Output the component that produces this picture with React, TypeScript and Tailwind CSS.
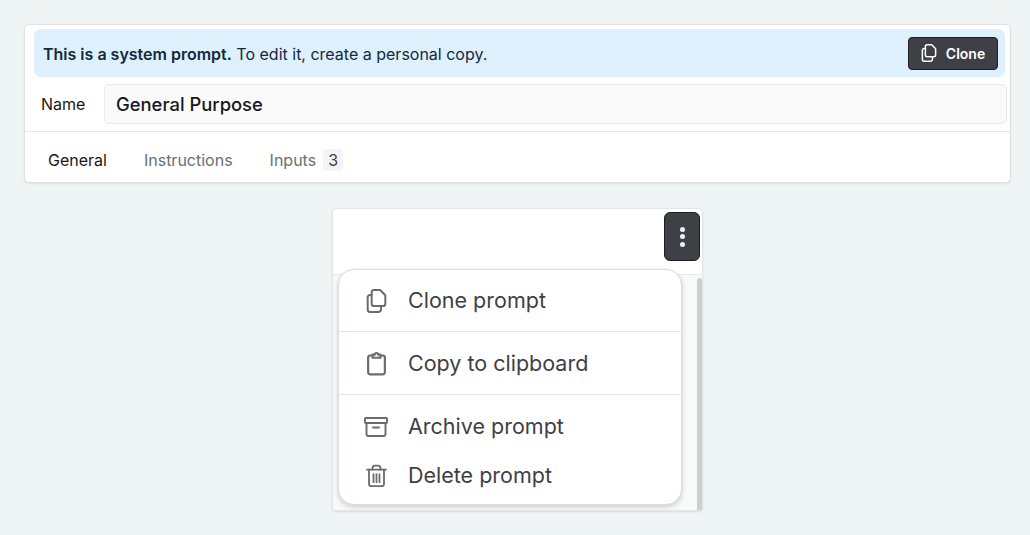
import React from "react";

function CloneIcon({ className }: { className?: string }) {
  return (
    <svg viewBox="2.7 2.3 16.8 20.4" fill="none" stroke="currentColor" strokeWidth="1.7" strokeLinejoin="round" strokeLinecap="round" className={className}>
      <path d="M9 3.200h5.200l4.400 4.400v7.200a2 2 0 0 1-2 2H9a2 2 0 0 1-2-2V5.200a2 2 0 0 1 2-2Z" />
      <path d="M7 7.400H5.600a2 2 0 0 0-2 2v10.400a2 2 0 0 0 2 2h6.800a2.600 2.600 0 0 0 2.600-2.600v-2.400" />
    </svg>
  );
}

function ClipboardIcon({ className }: { className?: string }) {
  return (
    <svg viewBox="3.7 2 16.600 21" fill="none" stroke="currentColor" strokeWidth="1.900" strokeLinejoin="round" strokeLinecap="round" className={className}>
      <path d="M8.500 5.500H6.500a1.800 1.800 0 0 0-1.800 1.800v12.900A1.800 1.800 0 0 0 6.500 22h11a1.800 1.800 0 0 0 1.800-1.800V7.300a1.800 1.800 0 0 0-1.800-1.800h-2" />
      <path d="M8.500 7.500V4.800h2a1.500 1.500 0 0 1 3 0h2v2.700Z" />
    </svg>
  );
}

function ArchiveIcon({ className }: { className?: string }) {
  return (
    <svg viewBox="0 2 24 20" fill="none" stroke="currentColor" strokeWidth="1.900" strokeLinejoin="round" strokeLinecap="round" className={className}>
      <rect x="1" y="3" width="22" height="5" rx="0.800" />
      <path d="M2.500 8v11a2 2 0 0 0 2 2h15a2 2 0 0 0 2-2V8" />
      <path d="M9 12.500h6" />
    </svg>
  );
}

function TrashIcon({ className }: { className?: string }) {
  return (
    <svg viewBox="1.500 1.200 21 22.200" fill="none" stroke="currentColor" strokeWidth="1.800" strokeLinejoin="round" strokeLinecap="round" className={className}>
      <path d="M2.500 6h19" />
      <path d="M8 6V4.500A2.500 2.500 0 0 1 10.500 2h3A2.500 2.500 0 0 1 16 4.500V6" />
      <path d="M4.500 6v14a2.500 2.500 0 0 0 2.500 2.500h10a2.500 2.500 0 0 0 2.500-2.500V6" />
      <path d="M9 10.500v8M12 10.500v8M15 10.500v8" />
    </svg>
  );
}

function MenuRow({ icon, label, className }: { icon: React.ReactNode; label: string; className: string }) {
  return (
    <div className={`flex items-center pl-[24px] text-[#3f3f46] ${className}`}>
      <span className="flex w-[45px] shrink-0 items-center text-[#6b6b72]">
        <span className="flex w-[26px] justify-center">{icon}</span>
      </span>
      <span className="text-[21.500px] leading-none">{label}</span>
    </div>
  );
}

export default function App() {
  return (
    <div className="h-[535px] w-[1030px] overflow-hidden bg-[#eff5f5] pt-[24px] font-['Inter',sans-serif]">
      <div className="ml-[24px] w-[987px] rounded-[5px] border border-[#dfe2e3] bg-white shadow-[0_1px_2px_rgba(0,0,0,0.08)]">
        <div className="pl-[9px] pr-[5px] pt-[4px]">
          <div className="flex h-[48px] items-center justify-between rounded-[7px] bg-[#dff0fd] pl-[9px] pr-[7px]">
            <p className="pt-[2px] text-[16px] text-[#13293d]">
              <span className="font-semibold">This is a system prompt.</span> To edit it, create a personal copy.
            </p>
            <button className="flex h-[33px] w-[90px] items-center justify-center gap-[9px] rounded-[4px] border border-[#1f1f23] bg-[#3f3f46] text-[14px] font-semibold text-white">
              <CloneIcon className="h-[18px] w-[16px]" />
              Clone
            </button>
          </div>
        </div>
        <div className="flex items-center pl-[16px] pr-[3px] pt-[7px]">
          <span className="w-[63px] text-[16px] text-[#18181b]">Name</span>
          <div className="flex h-[40px] flex-1 items-center rounded-[5px] border border-[#e8e9ea] bg-[#fafafa] pl-[11px] pt-[1px] text-[18.400px] font-medium text-[#18181b]">
            General Purpose
          </div>
        </div>
        <div className="mt-[7px] flex h-[51px] items-center border-t border-[#e3e5e6] pl-[23px] pt-[5px] text-[16px]">
          <span className="text-[#18181b]">General</span>
          <span className="ml-[37px] text-[#6b6f76]">Instructions</span>
          <span className="ml-[37px] text-[#6b6f76]">Inputs</span>
          <span className="ml-[7px] flex h-[22px] w-[20px] items-center justify-center rounded-[4px] bg-[#f4f4f5] text-[#3f3f46]">3</span>
        </div>
      </div>

      <div className="relative ml-[332px] mt-[25px] flex h-[303px] w-[371px] flex-col rounded-[4px] border border-[#e3e5e6] bg-white shadow-[0_1px_2px_rgba(0,0,0,0.1)]">
        <div className="flex h-[66px] items-start justify-end border-b border-[#e8e9ea] pr-[2px] pt-[3px]">
          <button className="flex h-[49px] w-[36px] flex-col items-center justify-center gap-[2.500px] rounded-[6px] border border-[#1f1f23] bg-[#3f3f46]">
            <span className="h-[5px] w-[5px] rounded-full bg-[#f0f0f2]" />
            <span className="h-[5px] w-[5px] rounded-full bg-[#f0f0f2]" />
            <span className="h-[5px] w-[5px] rounded-full bg-[#f0f0f2]" />
          </button>
        </div>
        <div className="flex flex-1 justify-end bg-[#f8f9f9]">
          <div className="mt-[3px] w-[5px] rounded-t-[3px] bg-[#cdd0d0]" />
        </div>
        <div className="absolute left-[5px] top-[60px] w-[344px] rounded-[16px] border border-[#dcdedf] bg-white shadow-[0_2px_5px_rgba(0,0,0,0.18)]">
          <MenuRow className="h-[62px] border-b border-[#e3e5e6] pt-[1px]" icon={<CloneIcon className="h-[24px] w-[21px]" />} label="Clone prompt" />
          <MenuRow className="h-[63px] border-b border-[#e3e5e6] pt-[1px]" icon={<ClipboardIcon className="h-[25px] w-[19px]" />} label="Copy to clipboard" />
          <div className="pb-[4px] pt-[7px]">
            <MenuRow className="h-[49px]" icon={<ArchiveIcon className="h-[22px] w-[24px]" />} label="Archive prompt" />
            <MenuRow className="h-[49px]" icon={<TrashIcon className="h-[24px] w-[21px]" />} label="Delete prompt" />
          </div>
        </div>
      </div>
    </div>
  );
}
